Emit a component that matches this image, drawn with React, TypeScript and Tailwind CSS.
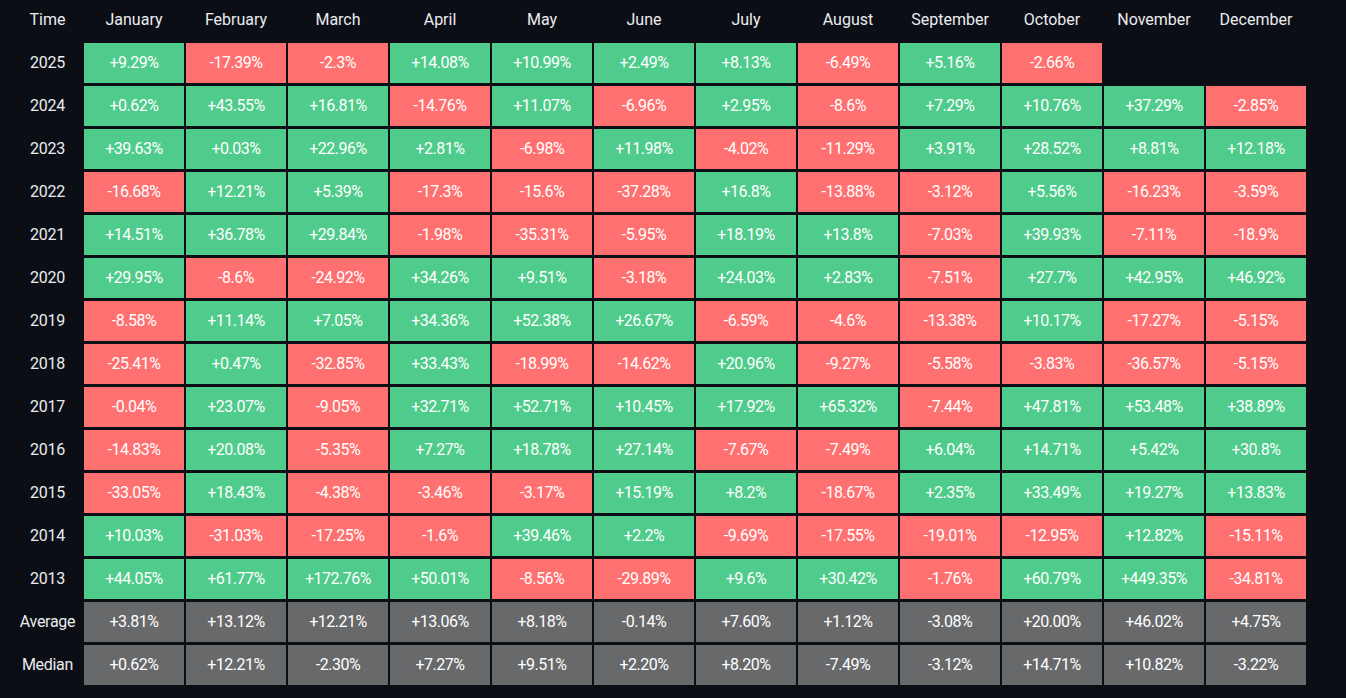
const months = [
  "January",
  "February",
  "March",
  "April",
  "May",
  "June",
  "July",
  "August",
  "September",
  "October",
  "November",
  "December",
];

const years: [string, string[]][] = [
  ["2025", ["+9.29%", "-17.39%", "-2.3%", "+14.08%", "+10.99%", "+2.49%", "+8.13%", "-6.49%", "+5.16%", "-2.66%"]],
  ["2024", ["+0.62%", "+43.55%", "+16.81%", "-14.76%", "+11.07%", "-6.96%", "+2.95%", "-8.6%", "+7.29%", "+10.76%", "+37.29%", "-2.85%"]],
  ["2023", ["+39.63%", "+0.03%", "+22.96%", "+2.81%", "-6.98%", "+11.98%", "-4.02%", "-11.29%", "+3.91%", "+28.52%", "+8.81%", "+12.18%"]],
  ["2022", ["-16.68%", "+12.21%", "+5.39%", "-17.3%", "-15.6%", "-37.28%", "+16.8%", "-13.88%", "-3.12%", "+5.56%", "-16.23%", "-3.59%"]],
  ["2021", ["+14.51%", "+36.78%", "+29.84%", "-1.98%", "-35.31%", "-5.95%", "+18.19%", "+13.8%", "-7.03%", "+39.93%", "-7.11%", "-18.9%"]],
  ["2020", ["+29.95%", "-8.6%", "-24.92%", "+34.26%", "+9.51%", "-3.18%", "+24.03%", "+2.83%", "-7.51%", "+27.7%", "+42.95%", "+46.92%"]],
  ["2019", ["-8.58%", "+11.14%", "+7.05%", "+34.36%", "+52.38%", "+26.67%", "-6.59%", "-4.6%", "-13.38%", "+10.17%", "-17.27%", "-5.15%"]],
  ["2018", ["-25.41%", "+0.47%", "-32.85%", "+33.43%", "-18.99%", "-14.62%", "+20.96%", "-9.27%", "-5.58%", "-3.83%", "-36.57%", "-5.15%"]],
  ["2017", ["-0.04%", "+23.07%", "-9.05%", "+32.71%", "+52.71%", "+10.45%", "+17.92%", "+65.32%", "-7.44%", "+47.81%", "+53.48%", "+38.89%"]],
  ["2016", ["-14.83%", "+20.08%", "-5.35%", "+7.27%", "+18.78%", "+27.14%", "-7.67%", "-7.49%", "+6.04%", "+14.71%", "+5.42%", "+30.8%"]],
  ["2015", ["-33.05%", "+18.43%", "-4.38%", "-3.46%", "-3.17%", "+15.19%", "+8.2%", "-18.67%", "+2.35%", "+33.49%", "+19.27%", "+13.83%"]],
  ["2014", ["+10.03%", "-31.03%", "-17.25%", "-1.6%", "+39.46%", "+2.2%", "-9.69%", "-17.55%", "-19.01%", "-12.95%", "+12.82%", "-15.11%"]],
  ["2013", ["+44.05%", "+61.77%", "+172.76%", "+50.01%", "-8.56%", "-29.89%", "+9.6%", "+30.42%", "-1.76%", "+60.79%", "+449.35%", "-34.81%"]],
];

const summary: [string, string[]][] = [
  ["Average", ["+3.81%", "+13.12%", "+12.21%", "+13.06%", "+8.18%", "-0.14%", "+7.60%", "+1.12%", "-3.08%", "+20.00%", "+46.02%", "+4.75%"]],
  ["Median", ["+0.62%", "+12.21%", "-2.30%", "+7.27%", "+9.51%", "+2.20%", "+8.20%", "-7.49%", "-3.12%", "+14.71%", "+10.82%", "-3.22%"]],
];

function Cell({ value, gray }: { value?: string; gray?: boolean }) {
  if (!value) return <div className="h-10" />;
  const bg = gray
    ? "bg-[#68696b]"
    : value.startsWith("-")
      ? "bg-[#ff7171]"
      : "bg-[#4fcc8b]";
  return (
    <div
      className={`flex h-10 items-center justify-center tracking-[-0.5px] text-white ${bg}`}
    >
      {value}
    </div>
  );
}

export default function App() {
  return (
    <div className="h-[698px] w-[1346px] overflow-hidden bg-[#0c0e16] text-[16px] font-['Roboto','Liberation_Sans',Arial,sans-serif]">
      <div className="grid grid-cols-[82px_repeat(12,100px)] gap-x-[2px] gap-y-[3px]">
        <div className="flex h-10 items-center justify-center pl-[13px] text-[#eaecef]">
          Time
        </div>
        {months.map((m) => (
          <div
            key={m}
            className="flex h-10 items-center justify-center text-[#eaecef]"
          >
            {m}
          </div>
        ))}

        {years.map(([year, vals]) => (
          <Row key={year} label={year} vals={vals} />
        ))}
        {summary.map(([label, vals]) => (
          <Row key={label} label={label} vals={vals} gray />
        ))}
      </div>
    </div>
  );
}

function Row({
  label,
  vals,
  gray,
}: {
  label: string;
  vals: string[];
  gray?: boolean;
}) {
  return (
    <>
      <div className="flex h-10 items-center justify-center pl-[13px] tracking-[-0.3px] text-[#eaecef]">
        {label}
      </div>
      {months.map((m, i) => (
        <Cell key={m} value={vals[i]} gray={gray} />
      ))}
    </>
  );
}
